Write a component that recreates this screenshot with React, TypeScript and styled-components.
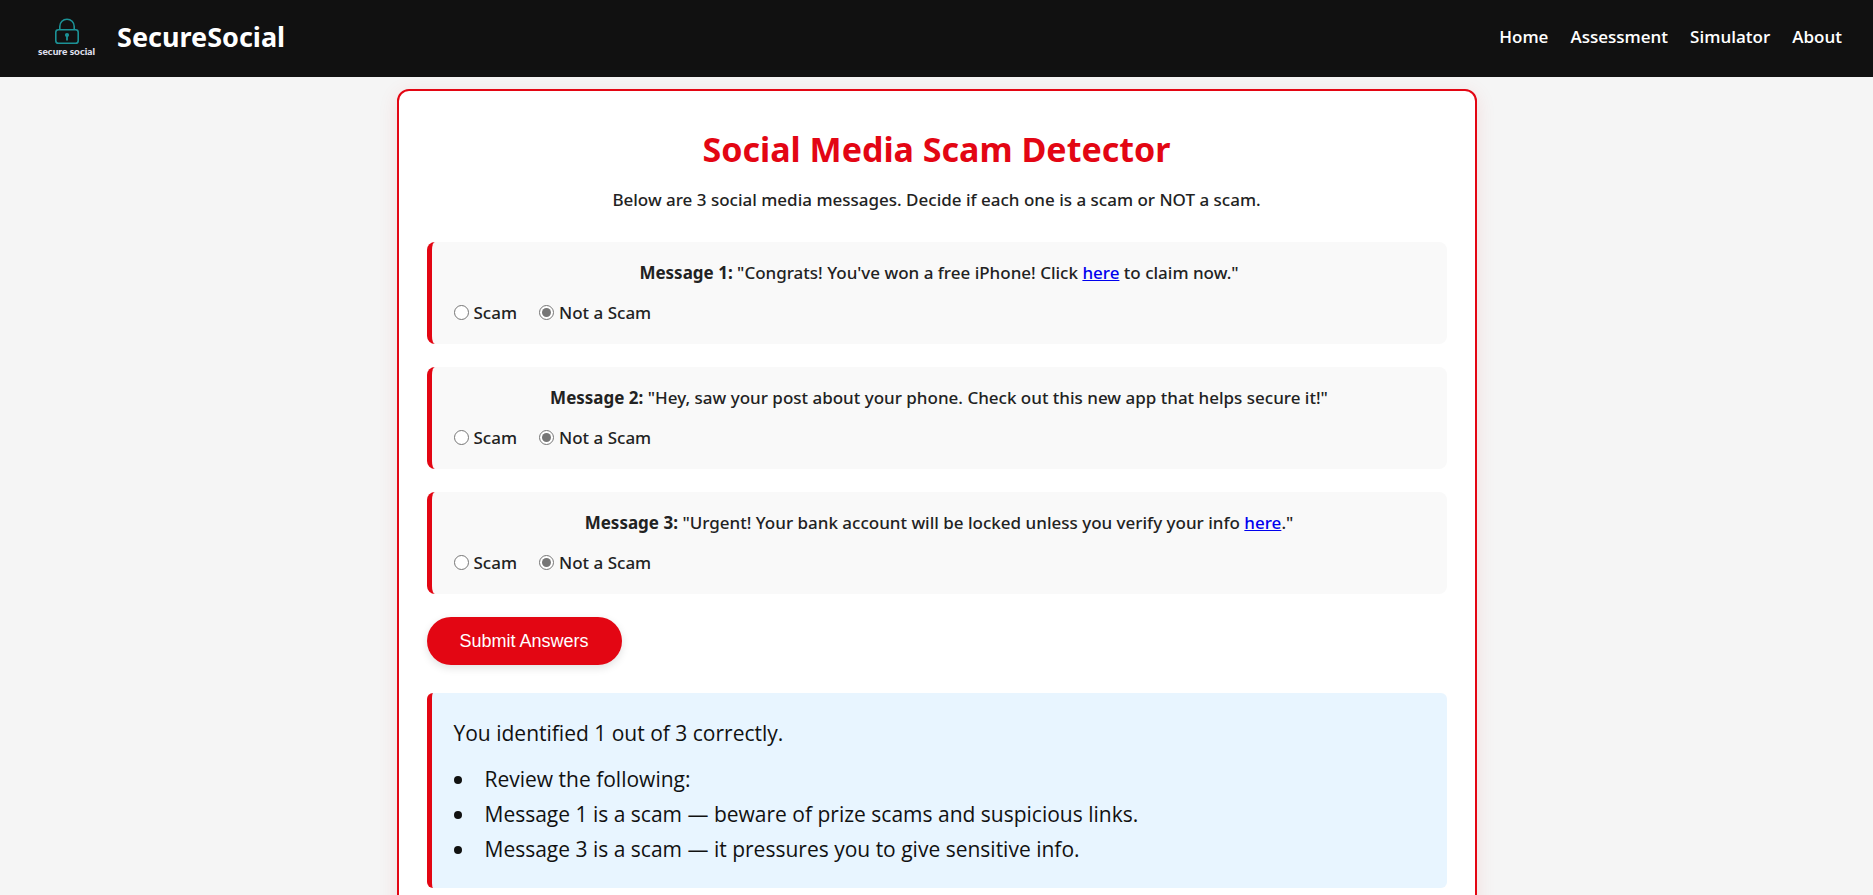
import React, { useState } from "react";
import styled, { createGlobalStyle } from "styled-components";

const RED = "#e30613";

const GlobalStyle = createGlobalStyle`
  * { box-sizing: border-box; }
  body {
    margin: 0;
    background: #f5f5f5;
    color: #222;
    font-family: "Noto Sans", "Open Sans", sans-serif;
    font-size: 17px;
    font-weight: 500;
    line-height: 24px;
  }
`;

const Header = styled.header`
  display: flex;
  align-items: center;
  justify-content: space-between;
  padding: 13px 31px 16px;
  background: #111;
  color: #fff;
`;

const Brand = styled.div`
  display: flex;
  align-items: center;
  gap: 15px;
`;

const Logo = styled.div`
  display: flex;
  flex-direction: column;
  align-items: center;
  width: 71px;
  color: #e0e0f0;
  font-family: Lato, sans-serif;
  font-size: 10px;
  font-weight: 900;
  line-height: 12px;
  white-space: nowrap;
`;

const BrandName = styled.div`
  font-size: 27px;
  font-weight: 700;
  line-height: 48px;
`;

const Nav = styled.nav`
  display: flex;
  gap: 22px;
`;

const NavLink = styled.a`
  color: #fff;
  font-family: "Open Sans", "Noto Sans", sans-serif;
  font-size: 17px;
  font-weight: 600;
  text-decoration: none;
`;

const Card = styled.main`
  max-width: 1080px;
  margin: 12px auto 40px;
  padding: 34px 28px 28px;
  border: 2px solid ${RED};
  border-radius: 12px;
  background: #fff;
  box-shadow: 0 4px 20px rgba(227, 6, 19, 0.1);
`;

const Title = styled.h1`
  margin: 0 0 15px;
  color: ${RED};
  font-size: 34px;
  font-weight: 700;
  line-height: 48px;
  text-align: center;
`;

const Intro = styled.p`
  margin: 0 0 30px;
  text-align: center;
`;

const Quiz = styled.form`
  display: flex;
  flex-direction: column;
  align-items: stretch;
  gap: 23px;
`;

const Message = styled.fieldset`
  display: flex;
  flex-direction: column;
  gap: 16px;
  min-width: 0;
  margin: 0;
  padding: 19px 22px;
  border: 0;
  border-left: 5px solid ${RED};
  border-radius: 8px;
  background: #f9f9f9;
`;

const MessageText = styled.p`
  margin: 0;
  text-align: center;

  a { color: #0000ee; }
`;

const Choices = styled.div`
  display: flex;
  gap: 22px;
`;

const Choice = styled.label`
  display: flex;
  align-items: center;
  gap: 5px;
`;

const Radio = styled.input`
  display: grid;
  place-items: center;
  appearance: none;
  width: 15px;
  height: 15px;
  margin: 0 0 2px;
  border: 1px solid #767676;
  border-radius: 50%;
  background: #fff;

  &:checked::before {
    content: "";
    width: 9px;
    height: 9px;
    border-radius: 50%;
    background: #767676;
  }
`;

const SubmitButton = styled.button`
  align-self: flex-start;
  padding: 12px 33px;
  border: 0;
  border-radius: 24px;
  background: ${RED};
  box-shadow: 0 3px 8px rgba(0, 0, 0, 0.12);
  color: #fff;
  font-family: "Liberation Sans", Arial, sans-serif;
  font-size: 18px;
  font-weight: 400;
  line-height: 24px;
  cursor: pointer;
`;

const Result = styled.section`
  margin-top: 28px;
  padding: 23px 22px 21px;
  border-left: 5px solid ${RED};
  border-radius: 6px;
  background: #e8f5ff;
  color: #111;
  font-family: "Open Sans", "Noto Sans", sans-serif;
  font-size: 21px;
  line-height: 35px;
`;

const Score = styled.p`
  margin: 0 0 11px;
`;

const ReviewList = styled.ul`
  margin: 0;
  padding: 0;
  list-style: none;
`;

const ReviewItem = styled.li`
  display: flex;
  align-items: center;
  gap: 23px;

  &::before {
    content: "";
    flex: none;
    width: 8px;
    height: 8px;
    border-radius: 50%;
    background: #111;
  }
`;

const messages = [
  { id: 1, text: <>"Congrats! You've won a free iPhone! Click <a href="#claim">here</a> to claim now."</> },
  { id: 2, text: <>"Hey, saw your post about your phone. Check out this new app that helps secure it!"</> },
  { id: 3, text: <>"Urgent! Your bank account will be locked unless you verify your info <a href="#verify">here</a>."</> },
];

const options = ["Scam", "Not a Scam"];

const review = [
  "Review the following:",
  "Message 1 is a scam — beware of prize scams and suspicious links.",
  "Message 3 is a scam — it pressures you to give sensitive info.",
];

function LockIcon() {
  return (
    <svg width="26" height="27" viewBox="0 0 26 27" fill="none" stroke="#1c9296" strokeWidth="1.6" aria-hidden="true">
      <path d="M5.8 11.5V8.4a7.2 7.2 0 0 1 14.4 0v3.1" />
      <rect x="1.8" y="11.7" width="22.4" height="13.6" rx="2.6" />
      <circle cx="13" cy="17" r="2.1" fill="#1c9296" stroke="none" />
      <path d="M13 17v5.4" strokeWidth="1.8" />
    </svg>
  );
}

export default function App() {
  const [answers, setAnswers] = useState<Record<number, string>>({
    1: "Not a Scam",
    2: "Not a Scam",
    3: "Not a Scam",
  });

  return (
    <>
      <GlobalStyle />
      <Header>
        <Brand>
          <Logo>
            <LockIcon />
            <span>secure social</span>
          </Logo>
          <BrandName>SecureSocial</BrandName>
        </Brand>
        <Nav>
          {["Home", "Assessment", "Simulator", "About"].map((name) => (
            <NavLink key={name} href={`#${name.toLowerCase()}`}>{name}</NavLink>
          ))}
        </Nav>
      </Header>
      <Card>
        <Title>Social Media Scam Detector</Title>
        <Intro>Below are 3 social media messages. Decide if each one is a scam or NOT a scam.</Intro>
        <Quiz onSubmit={(e) => e.preventDefault()}>
          {messages.map(({ id, text }) => (
            <Message key={id}>
              <MessageText><strong>Message {id}:</strong> {text}</MessageText>
              <Choices>
                {options.map((option) => (
                  <Choice key={option}>
                    <Radio
                      type="radio"
                      name={`message-${id}`}
                      value={option}
                      checked={answers[id] === option}
                      onChange={() => setAnswers({ ...answers, [id]: option })}
                    />
                    {option}
                  </Choice>
                ))}
              </Choices>
            </Message>
          ))}
          <SubmitButton type="submit">Submit Answers</SubmitButton>
        </Quiz>
        <Result>
          <Score>You identified 1 out of 3 correctly.</Score>
          <ReviewList>
            {review.map((line) => <ReviewItem key={line}>{line}</ReviewItem>)}
          </ReviewList>
        </Result>
      </Card>
    </>
  );
}
